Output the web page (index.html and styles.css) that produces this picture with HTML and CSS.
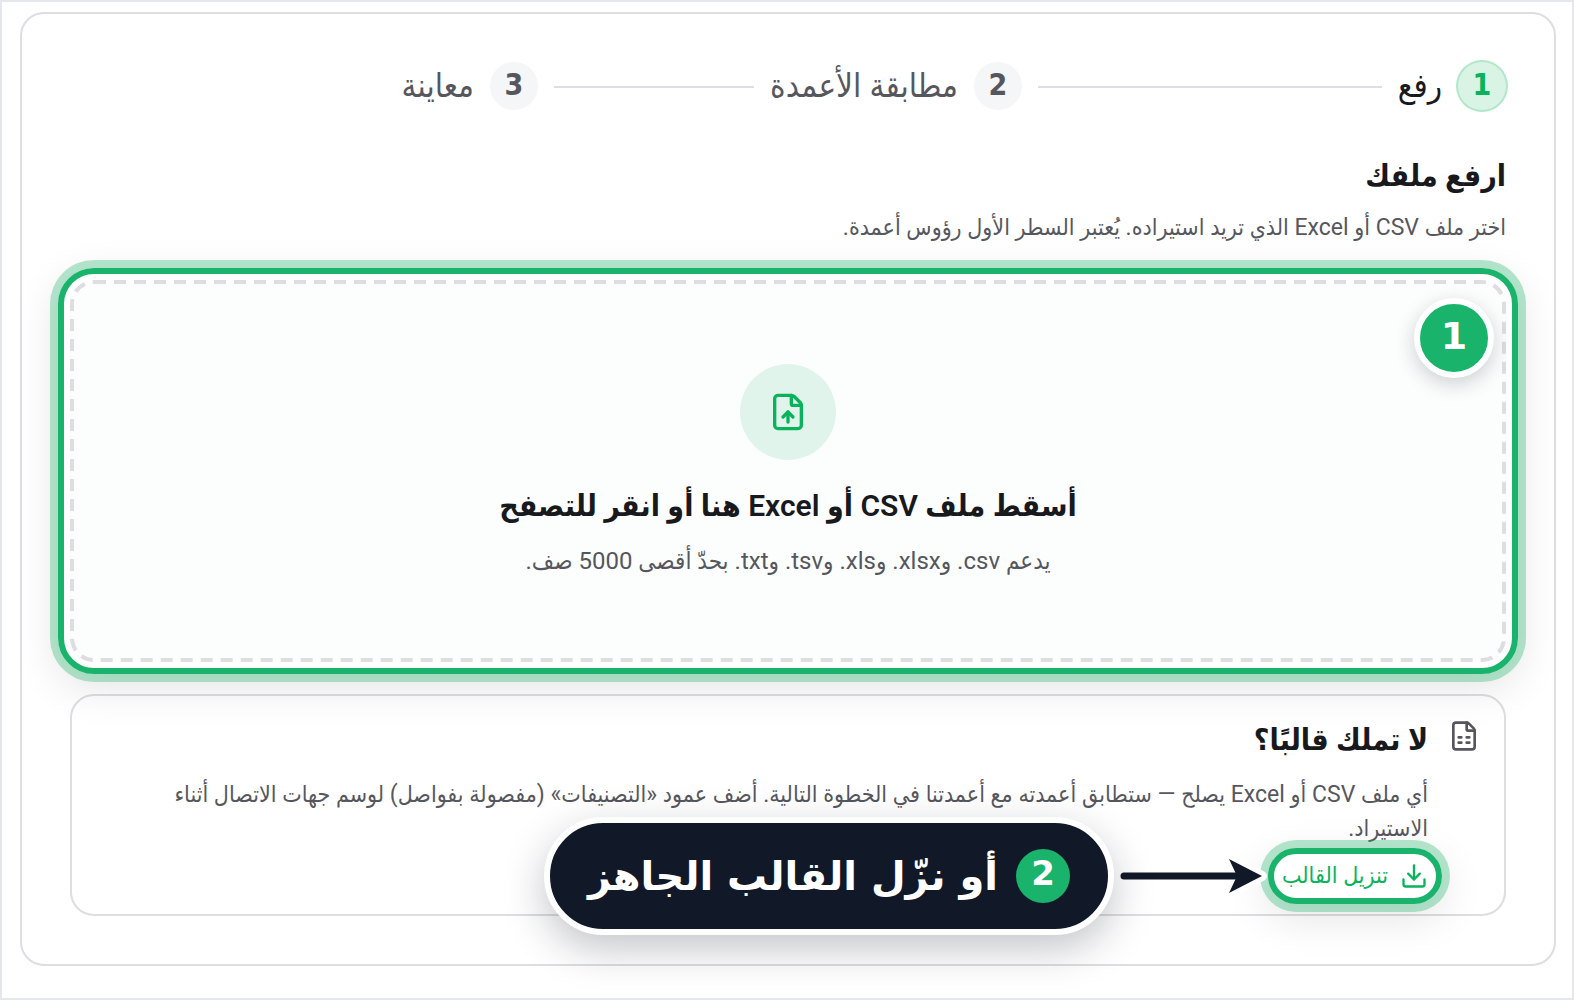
FILE: index.html
```html
<!DOCTYPE html>
<html lang="ar" dir="rtl">
<head>
    <meta charset="UTF-8">
    <meta name="viewport" content="width=device-width, initial-scale=1.0">
    <title>استيراد جهات الاتصال</title>
    <link rel="stylesheet" href="styles.css">
</head>
<body>

<main class="card">
    <ol class="steps">
        <li class="step active">
            <span class="step-number">1</span>
            <span class="step-name">رفع</span>
            <span class="step-line"></span>
        </li>
        <li class="step">
            <span class="step-number">2</span>
            <span class="step-name">مطابقة الأعمدة</span>
            <span class="step-line"></span>
        </li>
        <li class="step">
            <span class="step-number">3</span>
            <span class="step-name">معاينة</span>
        </li>
    </ol>

    <h1 class="page-title">ارفع ملفك</h1>
    <p class="text">اختر ملف CSV أو Excel الذي تريد استيراده. يُعتبر السطر الأول رؤوس أعمدة.</p>

    <label class="dropzone highlight" for="file">
        <svg class="dashes"><rect x="2" y="2" rx="22"/></svg>
        <input class="file-input" type="file" id="file" name="file" accept=".csv,.xlsx,.xls,.tsv,.txt">
        <span class="badge">1</span>
        <span class="drop-icon">
            <svg class="icon" width="40" height="40" viewBox="0 0 24 24">
                <path d="M6 22a2 2 0 0 1-2-2V4a2 2 0 0 1 2-2h8a2.4 2.4 0 0 1 1.704.706l3.588 3.588A2.4 2.4 0 0 1 20 8v12a2 2 0 0 1-2 2z"/>
                <path d="M14 2v5a1 1 0 0 0 1 1h5"/>
                <path d="M12 12v6"/>
                <path d="m15 15-3-3-3 3"/>
            </svg>
        </span>
        <span class="drop-title">أسقط ملف CSV أو Excel هنا أو انقر للتصفح</span>
        <span class="drop-note">يدعم <bdi dir="ltr">csv</bdi>. و<bdi dir="ltr">xlsx</bdi>. و<bdi dir="ltr">xls</bdi>. و<bdi dir="ltr">tsv</bdi>. و<bdi dir="ltr">txt</bdi>. بحدّ أقصى 5000 صف.</span>
    </label>

    <section class="template">
        <svg class="icon template-icon" width="32" height="32" viewBox="0 0 24 24">
            <path d="M6 22a2 2 0 0 1-2-2V4a2 2 0 0 1 2-2h8a2.4 2.4 0 0 1 1.704.706l3.588 3.588A2.4 2.4 0 0 1 20 8v12a2 2 0 0 1-2 2z"/>
            <path d="M14 2v5a1 1 0 0 0 1 1h5"/>
            <path d="M8 13h2M14 13h2M8 17h2M14 17h2"/>
        </svg>
        <div class="template-body">
            <h2 class="template-title">لا تملك قالبًا؟</h2>
            <p class="text">أي ملف CSV أو Excel يصلح — ستطابق أعمدته مع أعمدتنا في الخطوة التالية. أضف عمود «التصنيفات» (مفصولة بفواصل) لوسم جهات الاتصال أثناء الاستيراد.</p>
            <div class="download">
                <button class="download-button highlight" type="button">
                    <svg class="icon" width="28" height="28" viewBox="0 0 24 24">
                        <path d="M12 15V3"/>
                        <path d="M21 15v4a2 2 0 0 1-2 2H5a2 2 0 0 1-2-2v-4"/>
                        <path d="m7 10 5 5 5-5"/>
                    </svg>
                    تنزيل القالب
                </button>
                <div class="callout">
                    <svg class="arrow" width="160" height="44" viewBox="-6 0 160 44">
                        <path class="arrow-head" d="M109 5 142 22 109 39 117 22z"/>
                        <path class="arrow-line" d="M4 22H118"/>
                        <path class="arrow-tip" d="M109 5 142 22 109 39 117 22z"/>
                    </svg>
                    <div class="pill">
                        <span class="pill-number">2</span>
                        <span>أو نزّل القالب الجاهز</span>
                    </div>
                </div>
            </div>
        </div>
    </section>
</main>

</body>
</html>
```

FILE: styles.css
```css
* {
    box-sizing: border-box;
}
body {
    margin: 0;
    min-height: 100vh;
    padding: 10px 16px 32px 18px;
    border: 2px solid #e4e8ed;
    background-color: #fff;
    color: #18191d;
    font-family: Roboto, "DejaVu Sans Condensed", "DejaVu Sans", sans-serif;
}
h1, h2, p, ol {
    margin: 0;
    padding: 0;
}
.card {
    padding: 48px;
    border: 2px solid #dddde2;
    border-radius: 24px;
}
.icon {
    flex: none;
    fill: none;
    stroke: currentColor;
    stroke-width: 2;
    stroke-linecap: round;
    stroke-linejoin: round;
}
.text {
    color: #56575e;
    font-size: 23px;
    line-height: 34px;
}

/* Steps */
.steps {
    display: grid;
    grid-template-columns: repeat(3, 1fr);
    gap: 16px;
    list-style: none;
}
.step {
    display: flex;
    align-items: center;
    gap: 16px;
    color: #56575e;
    font-size: 33px;
    line-height: 48px;
}
.step-number {
    width: 48px;
    height: 48px;
    border-radius: 50%;
    background-color: #f5f6f8;
    font-family: "DejaVu Sans Condensed", "DejaVu Sans", sans-serif;
    font-size: 30px;
    font-weight: bold;
    line-height: 46px;
    text-align: center;
}
.step-line {
    flex: 1;
    height: 2px;
    margin-top: 2px;
    background-color: #dddde2;
}
.step.active {
    color: #18191d;
}
.active .step-number {
    background-color: #d9f3e5;
    box-shadow: 0 0 0 2px #b2e7cb;
    color: #08b35c;
}

/* Upload */
.page-title {
    margin-top: 40px;
    font-size: 30px;
    font-weight: 600;
    line-height: 52px;
}
.page-title + .text {
    margin-top: 9px;
}
.highlight {
    position: relative;
}
.highlight::after {
    content: '';
    position: absolute;
    inset: -12px;
    border: 6px solid #19b36b;
    border-radius: 36px;
    box-shadow: 0 0 0 8px rgba(25, 179, 107, 0.32), 0 12px 40px 4px rgba(0, 0, 0, 0.1);
    pointer-events: none;
}
.dropzone {
    display: flex;
    flex-direction: column;
    align-items: center;
    margin-top: 35px;
    padding: 84px 44px;
    border-radius: 24px;
    background-color: #fcfefd;
    cursor: pointer;
}
.dashes {
    position: absolute;
    inset: 0;
    width: 100%;
    height: 100%;
}
.dashes rect {
    width: calc(100% - 4px);
    height: calc(100% - 4px);
    fill: none;
    stroke: #dddde2;
    stroke-width: 4;
    stroke-dasharray: 12 8;
}
.file-input {
    position: absolute;
    opacity: 0;
    pointer-events: none;
}
.badge {
    position: absolute;
    top: 18px;
    right: 12px;
    width: 80px;
    height: 80px;
    border: 6px solid #fff;
    border-radius: 50%;
    background-color: #19b36b;
    box-shadow: 0 6px 20px rgba(17, 24, 39, 0.2);
    color: #fff;
    font-family: "DejaVu Sans", sans-serif;
    font-size: 38px;
    font-weight: bold;
    line-height: 64px;
    text-align: center;
}
.drop-icon {
    display: flex;
    align-items: center;
    justify-content: center;
    width: 96px;
    height: 96px;
    border-radius: 50%;
    background-color: #e1f4eb;
    color: #08b35c;
}
.drop-title {
    margin-top: 20px;
    font-size: 30px;
    font-weight: 600;
    line-height: 52px;
}
.drop-note {
    margin-top: 12px;
    color: #56575e;
    font-size: 24px;
    line-height: 34px;
}

/* Template */
.template {
    display: flex;
    gap: 20px;
    margin-top: 32px;
    padding: 24px;
    border: 2px solid #dddde2;
    border-radius: 24px;
}
.template-icon {
    color: #56575e;
}
.template-body {
    flex: 1;
}
.template-title {
    margin-bottom: 18px;
    font-size: 30px;
    font-weight: 600;
    line-height: 40px;
}
.download {
    position: relative;
    width: fit-content;
    margin-top: 16px;
}
.download-button {
    display: flex;
    align-items: center;
    gap: 12px;
    padding: 0;
    border: 0;
    background: none;
    color: #08b35c;
    font-family: inherit;
    font-size: 23px;
    line-height: 28px;
    cursor: pointer;
}
.download-button::after {
    inset: -14px;
    border-radius: 28px;
}

/* Callout over the download button */
.callout {
    position: absolute;
    top: 50%;
    right: 100%;
    z-index: 1;
    display: flex;
    align-items: center;
    margin-right: 8px;
    transform: translateY(-50%);
}
.arrow {
    flex: none;
}
.arrow-head {
    fill: #fff;
    stroke: #fff;
    stroke-width: 10;
    stroke-linejoin: round;
}
.arrow-line {
    stroke: #111827;
    stroke-width: 7;
    stroke-linecap: round;
}
.arrow-tip {
    fill: #111827;
}
.pill {
    display: flex;
    align-items: center;
    gap: 18px;
    padding: 24px 38px;
    border: 6px solid #fff;
    border-radius: 60px;
    background-color: #111827;
    box-shadow: 0 14px 40px rgba(17, 24, 39, 0.25);
    color: #fff;
    font-family: "DejaVu Sans", sans-serif;
    font-size: 40px;
    font-weight: bold;
    line-height: 58px;
    white-space: nowrap;
}
.pill-number {
    width: 54px;
    height: 54px;
    border-radius: 50%;
    background-color: #19b36b;
    font-size: 34px;
    line-height: 48px;
    text-align: center;
}
```
